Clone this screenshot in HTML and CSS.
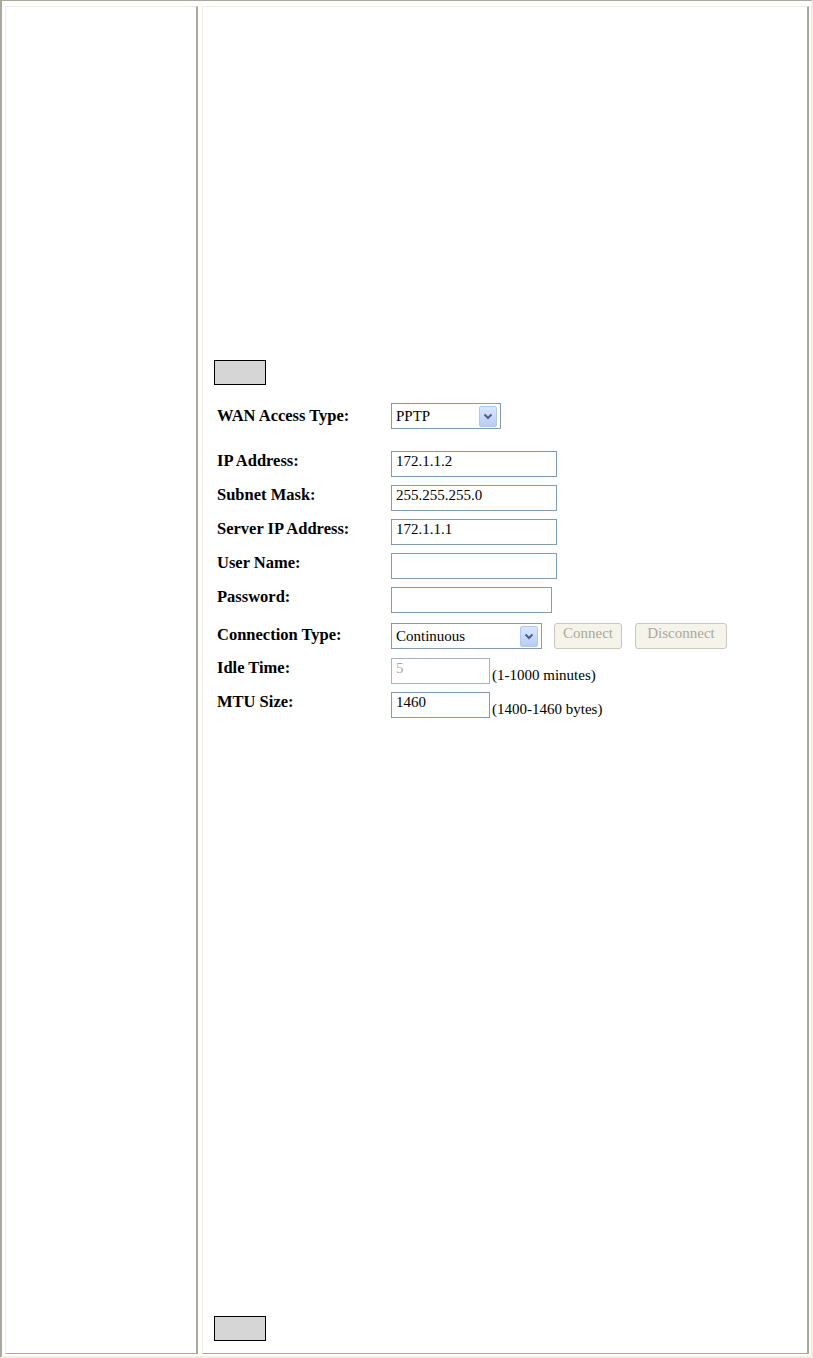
FILE: index.html
```html
<!DOCTYPE html>
<html lang="en">

<head>
    <meta charset="UTF-8"/>
    <meta content="width=device-width, initial-scale=1.0" name="viewport"/>
    <title>WAN Interface Setup</title>
    <link rel="stylesheet" href="styles.css">
</head>

<body>
    <div class="frame">
        <!-- left menu cell (empty) -->
        <div class="cell side"></div>

        <!-- main cell -->
        <div class="cell main">
            <div class="blank"></div>
            <button class="gray-btn" type="button"></button>

            <form class="wan-form">
                <div class="row row-type">
                    <label>WAN Access Type:</label>
                    <div class="select select-type">
                        <span class="select-value">PPTP</span>
                        <span class="select-btn">
                            <svg width="16" height="20" viewBox="0 0 16 20"><path d="M4.5 8.5 L8 12 L11.5 8.5" fill="none" stroke="#4d6185" stroke-width="2"/></svg>
                        </span>
                    </div>
                </div>

                <div class="row">
                    <label for="ip">IP Address:</label>
                    <input class="text" id="ip" type="text" value="172.1.1.2"/>
                </div>
                <div class="row">
                    <label for="mask">Subnet Mask:</label>
                    <input class="text" id="mask" type="text" value="255.255.255.0"/>
                </div>
                <div class="row">
                    <label for="server">Server IP Address:</label>
                    <input class="text" id="server" type="text" value="172.1.1.1"/>
                </div>
                <div class="row">
                    <label for="user">User Name:</label>
                    <input class="text" id="user" type="text" value=""/>
                </div>
                <div class="row row-pass">
                    <label for="pass">Password:</label>
                    <input class="text text-pass" id="pass" type="password" value=""/>
                </div>
                <div class="row row-conn">
                    <label>Connection Type:</label>
                    <div class="field field-conn">
                        <div class="select select-conn">
                            <span class="select-value">Continuous</span>
                            <span class="select-btn">
                                <svg width="16" height="20" viewBox="0 0 16 20"><path d="M4.5 8.5 L8 12 L11.5 8.5" fill="none" stroke="#4d6185" stroke-width="2"/></svg>
                            </span>
                        </div>
                        <button class="dis-btn btn-connect" type="button" disabled>Connect</button>
                        <button class="dis-btn btn-disconnect" type="button" disabled>Disconnect</button>
                    </div>
                </div>
                <div class="row row-idle">
                    <label for="idle">Idle Time:</label>
                    <span class="field">
                        <input class="text text-short" id="idle" type="text" value="5" disabled/>
                        <span class="hint">(1-1000 minutes)</span>
                    </span>
                </div>
                <div class="row">
                    <label for="mtu">MTU Size:</label>
                    <span class="field">
                        <input class="text text-short" id="mtu" type="text" value="1460"/>
                        <span class="hint">(1400-1460 bytes)</span>
                    </span>
                </div>
            </form>

            <button class="gray-btn gray-btn-bottom" type="button"></button>
        </div>
    </div>
</body>

</html>
```

FILE: styles.css
```css
* {
    margin: 0;
    padding: 0;
    box-sizing: border-box;
}

body {
    font-family: "Liberation Serif", "Times New Roman", serif;
    color: #000;
    background: #fff;
}

/* outer table frame */
.frame {
    display: flex;
    gap: 4px;
    width: 813px;
    height: 1358px;
    padding: 5px 2px 2px 3px;
    border-style: solid;
    border-width: 1px 2px 2px 2px;
    border-color: #aca899 #f1efe2 #f1efe2 #aca899;
}

.cell {
    border-style: solid;
    border-width: 1px 2px 1px 1px;
    border-color: #f1efe2 #aca899 #aca899 #f1efe2;
}

.side {
    width: 193px;
}

.main {
    width: 607px;
    display: flex;
    flex-direction: column;
    align-items: flex-start;
}

.blank {
    height: 353px;
}

.gray-btn {
    width: 52px;
    height: 25px;
    margin-left: 11px;
    border: 1px solid #000;
    background: #d6d6d6;
}

.gray-btn-bottom {
    margin-top: auto;
    margin-bottom: 12px;
}

/* form */
.wan-form {
    margin: 18px 0 0 14px;
}

.row {
    display: flex;
    align-items: baseline;
    margin-bottom: 8px;
}

.row label {
    width: 174px;
    font-size: 16.5px;
    font-weight: bold;
}

.row-type {
    margin-bottom: 22px;
}

.row-pass {
    margin-bottom: 10px;
}

.row-conn {
    margin-bottom: 9px;
}

.row-conn label {
    align-self: center;
    padding-bottom: 3px;
}

.text {
    width: 166px;
    height: 26px;
    padding: 1px 4px 6px;
    border: 1px solid #7f9db9;
    outline: none;
    font: 15px/17px "Liberation Serif", "Times New Roman", serif;
    color: #000;
    background: #fff;
}

.text-pass {
    width: 161px;
}

.text-short {
    width: 99px;
}

.text:disabled {
    color: #aca899;
    border-color: #a5b5c6;
    background: #fff;
}

.field {
    display: flex;
    align-items: flex-end;
}

.field-conn {
    align-items: center;
}

.hint {
    margin-left: 2px;
    font-size: 15px;
    line-height: 17px;
}

/* fake xp select */
.select {
    display: flex;
    align-items: center;
    justify-content: space-between;
    height: 26px;
    padding: 2px 3px 2px 4px;
    border: 1px solid #7f9db9;
    background: #fff;
    font-size: 15px;
    line-height: 17px;
}

.select-type {
    width: 110px;
}

.select-conn {
    width: 151px;
}

.select-btn {
    display: flex;
    align-items: center;
    justify-content: center;
    width: 18px;
    height: 21px;
    border: 1px solid #b3c7f3;
    border-radius: 2px;
    background: linear-gradient(#dce7fd, #b7cbf6);
}

/* disabled xp buttons */
.dis-btn {
    height: 26px;
    padding-bottom: 5px;
    border: 1px solid #cac8bb;
    border-radius: 3px;
    background: #f5f4ea;
    color: #aca899;
    font: 15px "Liberation Serif", "Times New Roman", serif;
}

.btn-connect {
    width: 68px;
    margin-left: 12px;
}

.btn-disconnect {
    width: 92px;
    margin-left: 13px;
}
```
